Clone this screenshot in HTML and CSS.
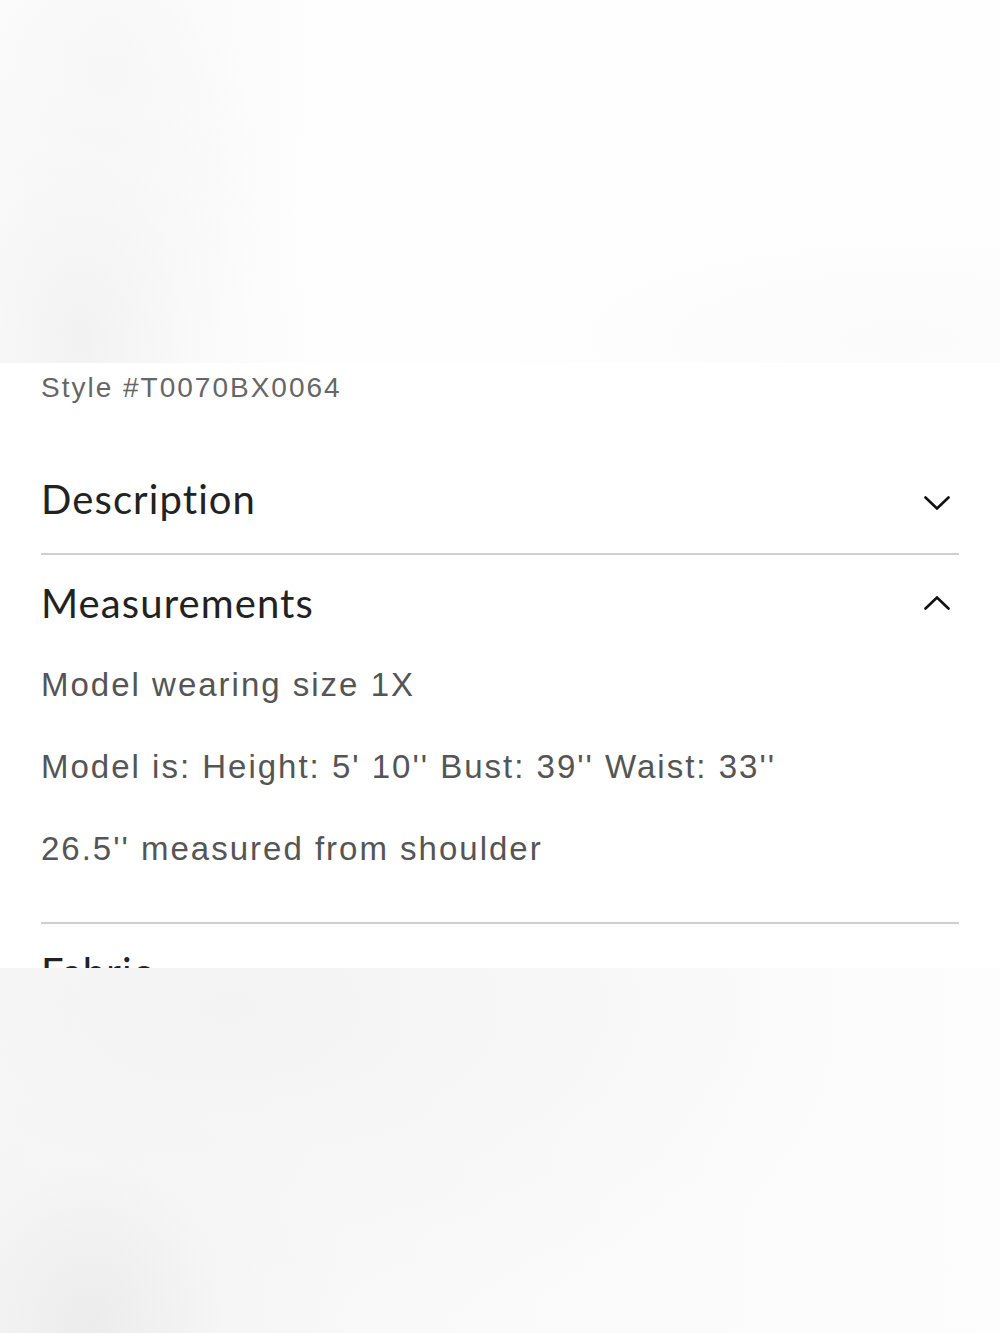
FILE: index.html
```html
<!DOCTYPE html>
<html lang="en">
<head>
<meta charset="utf-8">
<title>Product details</title>
<link rel="stylesheet" href="styles.css">
</head>
<body>
<div class="page">
  <div class="gallery gallery-top"></div>
  <section class="details">
    <p class="style-no">Style #T0070BX0064</p>
    <div class="acc-item">
      <div class="acc-head">
        <h2 class="acc-title">Description</h2>
        <svg class="chev chev-down" viewBox="0 0 26 14" width="26" height="14"><path d="M1.5 1.5 L13 12.5 L24.5 1.5" /></svg>
      </div>
    </div>
    <div class="acc-item open">
      <div class="acc-head">
        <h2 class="acc-title">Measurements</h2>
        <svg class="chev" viewBox="0 0 26 14" width="26" height="14"><path d="M1.5 12.5 L13 1.5 L24.5 12.5" /></svg>
      </div>
      <div class="acc-body">
        <p>Model wearing size 1X</p>
        <p>Model is: Height: 5' 10'' Bust: 39'' Waist: 33''</p>
        <p>26.5'' measured from shoulder</p>
      </div>
    </div>
    <div class="acc-item">
      <div class="acc-head">
        <h2 class="acc-title">Fabric</h2>
      </div>
    </div>
  </section>
  <div class="gallery gallery-bottom"></div>
</div>
</body>
</html>
```
FILE: styles.css
```css
html, body {
  margin: 0;
  padding: 0;
  background: #fff;
}
.page {
  width: 1000px;
  display: flex;
  flex-direction: column;
}
.gallery {
  flex: none;
}
.gallery-top {
  height: 363px;
  background:
    radial-gradient(ellipse 240px 380px at 80px 340px, #f2f2f2 0%, rgba(246,246,246,0.6) 45%, rgba(255,255,255,0) 100%),
    radial-gradient(ellipse 220px 320px at 110px 60px, #f8f8f8 0%, rgba(255,255,255,0) 100%),
    radial-gradient(ellipse 400px 120px at 900px 340px, #fbfbfb 0%, rgba(255,255,255,0) 100%),
    #fefefe;
}
.details {
  height: 605px;
  overflow: hidden;
  padding: 5px 41px 0;
  box-sizing: border-box;
  background: #fff;
}
.style-no {
  margin: 0 0 43px;
  font-family: "Liberation Sans", Arial, sans-serif;
  font-size: 28px;
  line-height: 40px;
  letter-spacing: 2px;
  color: #666;
}
.acc-item {
  border-bottom: 2px solid #d0d0d0;
}
.acc-head {
  display: flex;
  align-items: center;
  justify-content: space-between;
  padding: 25px 0 31px;
}
.acc-title {
  margin: 0;
  font-family: Lato, "Open Sans", sans-serif;
  font-weight: 400;
  font-size: 40px;
  line-height: 46px;
  letter-spacing: 1.1px;
  color: #222;
}
.chev {
  margin-right: 9px;
  fill: none;
  stroke: #111;
  stroke-width: 2.6;
  stroke-linecap: round;
  stroke-linejoin: miter;
}
.chev-down {
  margin-top: 8px;
}
.acc-body {
  padding: 8px 0 11px;
}
.acc-body p {
  margin: 0 0 42px;
  font-family: "Liberation Sans", Arial, sans-serif;
  font-size: 33px;
  line-height: 40px;
  letter-spacing: 2px;
  color: #555;
}
.gallery-bottom {
  height: 365px;
  background:
    radial-gradient(ellipse 260px 300px at 90px 355px, #ececec 0%, rgba(244,244,244,0.6) 50%, rgba(255,255,255,0) 100%),
    radial-gradient(ellipse 650px 330px at 230px 40px, #f3f3f3 0%, rgba(246,246,246,0.7) 50%, rgba(255,255,255,0) 100%),
    linear-gradient(90deg, #f6f6f6 0%, #fafafa 50%, #fdfdfd 100%);
}
```
